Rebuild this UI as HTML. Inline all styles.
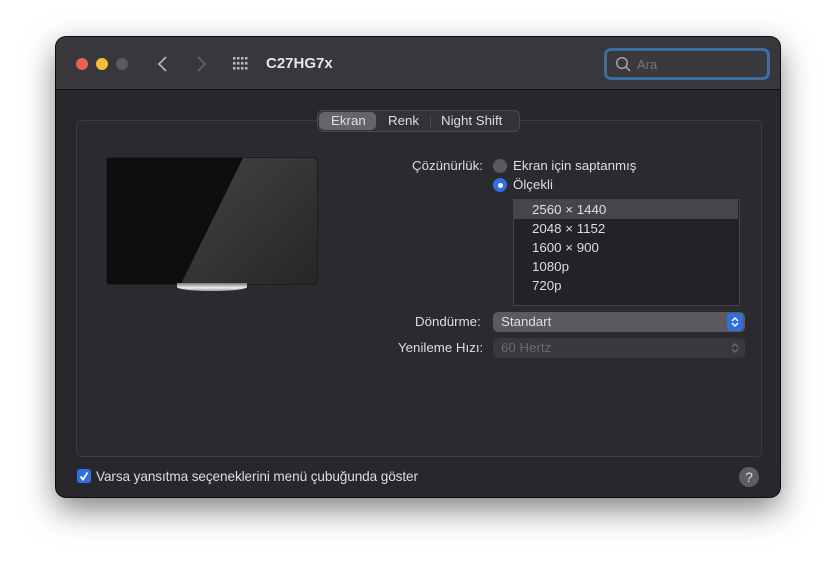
<!DOCTYPE html><html><head><meta charset="utf-8"><style>
body{margin:0;width:836px;height:572px;background:#fff;position:relative;overflow:hidden;font-family:"Liberation Sans",sans-serif;}
.a{position:absolute}
.win{left:56px;top:37px;width:724px;height:460px;border-radius:10px;background:#28272b;overflow:hidden;box-shadow:0 12px 32px rgba(0,0,0,.5),0 0 0 1px #111}
.tb{left:0;top:0;width:724px;height:52px;background:#38373c;border-bottom:1px solid #111}
.t{color:#dedde0;font-size:13.3px;white-space:nowrap}
.dot{width:12px;height:12px;border-radius:50%;top:21px}
</style></head><body>
<div class="a win">
 <div class="a tb">
  <div class="a dot" style="left:20px;background:#ee5f56"></div>
  <div class="a dot" style="left:40px;background:#f6bd3a"></div>
  <div class="a dot" style="left:60px;background:#5b5a5f"></div>
  <svg class="a" style="left:100px;top:17px" width="14" height="20"><path d="M10 3L3 10L10 17" stroke="#bbb" stroke-width="1.6" fill="none"/></svg>
  <svg class="a" style="left:138px;top:17px" width="14" height="20"><path d="M4 3L11 10L4 17" stroke="#666" stroke-width="1.6" fill="none"/></svg>
  <svg class="a" style="left:177px;top:20px" width="18" height="14" fill="#bbb">
   <rect x="0" y="0" width="2.5" height="2.5"/><rect x="4" y="0" width="2.5" height="2.5"/><rect x="8" y="0" width="2.5" height="2.5"/><rect x="12" y="0" width="2.5" height="2.5"/>
   <rect x="0" y="5" width="2.5" height="2.5"/><rect x="4" y="5" width="2.5" height="2.5"/><rect x="8" y="5" width="2.5" height="2.5"/><rect x="12" y="5" width="2.5" height="2.5"/>
   <rect x="0" y="10" width="2.5" height="2.5"/><rect x="4" y="10" width="2.5" height="2.5"/><rect x="8" y="10" width="2.5" height="2.5"/><rect x="12" y="10" width="2.5" height="2.5"/></svg>
  <div class="a" style="left:210px;top:18px;color:#e6e6e8;font-size:15px;font-weight:bold">C27HG7x</div>
  <div class="a" style="left:548px;top:11px;width:160px;height:26px;border:3px solid #3f6e9c;border-radius:7px;background:#3a393e"></div>
  <svg class="a" style="left:559px;top:19px" width="18" height="18"><circle cx="7" cy="7" r="5.3" stroke="#aaa" stroke-width="1.4" fill="none"/><path d="M11 11L15 15" stroke="#aaa" stroke-width="1.5"/></svg>
  <div class="a" style="left:581px;top:20px;color:#77767b;font-size:13px">Ara</div>
 </div>
 <div class="a" style="left:20px;top:83px;width:684px;height:335px;border:1px solid #3d3c41;border-radius:5px;background:#2b2a2e"></div>
 <div class="a" style="left:261px;top:73px;width:201px;height:20px;border:1px solid #4a494e;border-radius:6px;background:#333237"></div>
 <div class="a" style="left:263px;top:75px;width:57px;height:18px;border-radius:5px;background:#65646a"></div>
 <div class="a" style="left:374px;top:78px;width:1px;height:13px;background:#4a494e"></div>
 <div class="a t" style="left:275px;top:76px">Ekran</div>
 <div class="a t" style="left:332px;top:76px">Renk</div>
 <div class="a t" style="left:385px;top:76px">Night Shift</div>
 <svg class="a" style="left:50px;top:120px" width="212" height="128">
  <defs><linearGradient id="g" x1="0" y1="0" x2="1" y2="1"><stop offset="0" stop-color="#444"/><stop offset="1" stop-color="#262626"/></linearGradient></defs>
  <rect x="0.5" y="0.5" width="211" height="127" rx="3" fill="#0e0e0e" stroke="#1e1d21"/>
  <path d="M137 1H208a3 3 0 0 1 3 3V124a3 3 0 0 1-3 3H75Z" fill="url(#g)"/>
 </svg>
 <div class="a" style="left:121px;top:246px;width:70px;height:8px;border-radius:0 0 50% 50%;background:linear-gradient(#777,#eee 60%,#999)"></div>
 <div class="a t" style="left:356px;top:121px">Çözünürlük:</div>
 <div class="a" style="left:437px;top:122px;width:14px;height:14px;border-radius:50%;background:#5a595e"></div>
 <div class="a t" style="left:457px;top:121px">Ekran için saptanmış</div>
 <div class="a" style="left:437px;top:141px;width:14px;height:14px;border-radius:50%;background:#2f6fe0"></div>
 <div class="a" style="left:442px;top:146px;width:5px;height:5px;border-radius:50%;background:#fff"></div>
 <div class="a t" style="left:457px;top:140px">Ölçekli</div>
 <div class="a" style="left:457px;top:162px;width:225px;height:105px;border:1px solid #444348;background:#232226"></div>
 <div class="a" style="left:458px;top:163px;width:224px;height:19px;background:#464549"></div>
 <div class="a t" style="left:476px;top:165px">2560 × 1440</div>
 <div class="a t" style="left:476px;top:184px">2048 × 1152</div>
 <div class="a t" style="left:476px;top:203px">1600 × 900</div>
 <div class="a t" style="left:476px;top:222px">1080p</div>
 <div class="a t" style="left:476px;top:241px">720p</div>
 <div class="a t" style="left:359px;top:277px">Döndürme:</div>
 <div class="a" style="left:437px;top:275px;width:252px;height:20px;border-radius:5px;background:#5b5a5f"></div>
 <div class="a t" style="left:445px;top:277px">Standart</div>
 <div class="a" style="left:671px;top:276px;width:16px;height:18px;border-radius:4px;background:#2f6fe0"></div>
 <svg class="a" style="left:673px;top:278px" width="12" height="14"><path d="M3 6L6 3L9 6M3 8L6 11L9 8" stroke="#fff" stroke-width="1.4" fill="none"/></svg>
 <div class="a t" style="left:342px;top:303px">Yenileme Hızı:</div>
 <div class="a" style="left:437px;top:301px;width:252px;height:20px;border-radius:5px;background:#39383d"></div>
 <div class="a" style="left:445px;top:303px;color:#6a696e;font-size:13.3px">60 Hertz</div>
 <svg class="a" style="left:673px;top:304px" width="12" height="14"><path d="M3 6L6 3L9 6M3 8L6 11L9 8" stroke="#6a696e" stroke-width="1.4" fill="none"/></svg>
 <div class="a" style="left:21px;top:432px;width:14px;height:14px;border-radius:3px;background:#2f6fe0"></div>
 <svg class="a" style="left:21px;top:432px" width="14" height="14"><path d="M3.5 7.5L6 10.5L10.5 3.5" stroke="#fff" stroke-width="1.8" fill="none"/></svg>
 <div class="a t" style="left:40px;top:432px;font-size:13.6px;letter-spacing:-0.1px">Varsa yansıtma seçeneklerini menü çubuğunda göster</div>
 <div class="a" style="left:683px;top:430px;width:20px;height:20px;border-radius:50%;background:#5e5d62;color:#ddd;font-size:14px;text-align:center;line-height:20px">?</div>
</div>
</body></html>
